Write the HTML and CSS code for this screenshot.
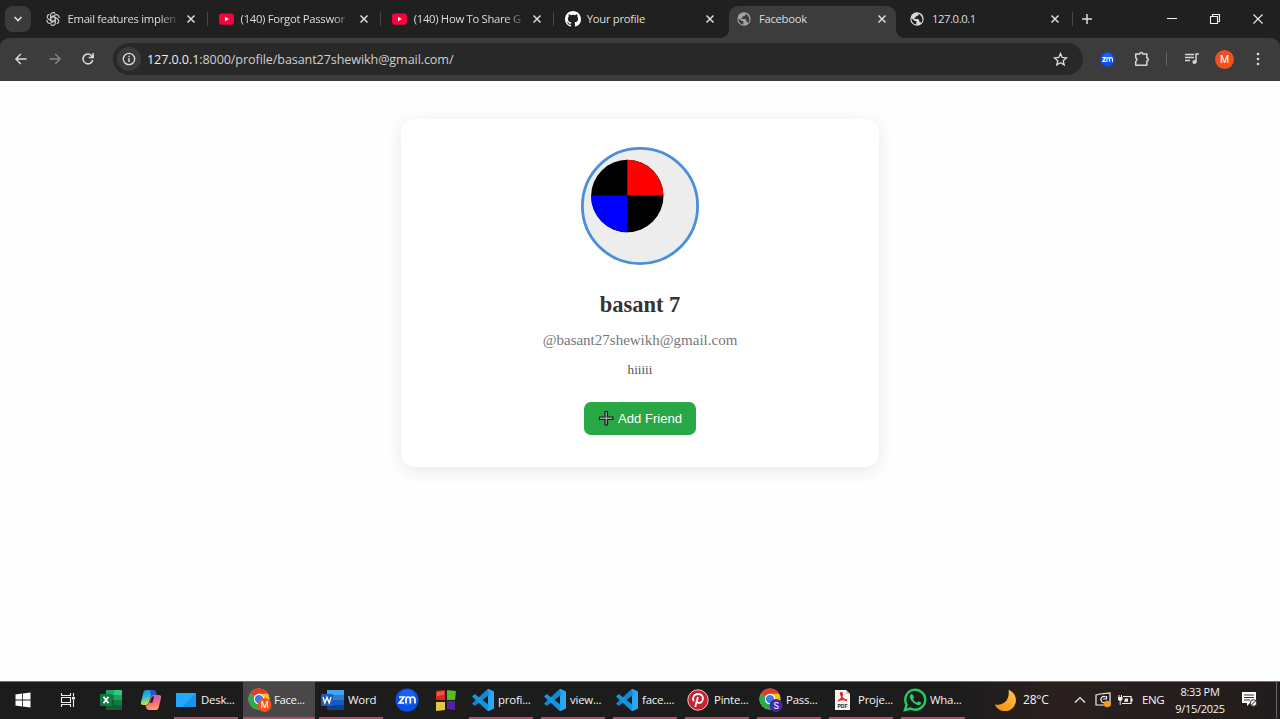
FILE: index.html
```html
<!DOCTYPE html>
<html lang="en">
<head>
<meta charset="utf-8">
<title>Facebook</title>
<link rel="stylesheet" href="styles.css">
</head>
<body>
<svg class="defs" aria-hidden="true">
  <symbol id="close" viewBox="0 0 10 10"><path d="M1.500 1.500l7 7M8.500 1.500l-7 7" fill="none" stroke="currentColor" stroke-width="1.500"/></symbol>
  <symbol id="youtube" viewBox="0 0 16 12"><rect width="16" height="12" rx="3" fill="#f5043b"/><path d="M6.300 3.500v5l4.200-2.500z" fill="#fff"/></symbol>
  <symbol id="globe" viewBox="0 0 14 14"><circle cx="7" cy="7" r="6.700" fill="currentColor"/><path d="M1.500 6.300l3.200 2.800h1.600v3.400C3.700 12.200 1.500 10 1.500 7zM8.500 1.700V3L7.200 4.300H5.700v1.500H4.500V7h3.700l1 1v1.800h1.200l.8 1.300C13.300 8.800 13 4.500 8.500 1.700z" fill="var(--hole)"/></symbol>
  <symbol id="zoom" viewBox="0 0 24 24"><circle cx="12" cy="12" r="11.500" fill="#0b50e8"/><circle cx="12" cy="9.500" r="8" fill="#2c70ff" opacity=".5"/><path d="M4 9h5L4.300 15H9M11 15.500V11.500Q11 9 13 9T15.300 11V15.500M15.300 11Q15.300 9 17.500 9T20 11.500V15.500" fill="none" stroke="#fff" stroke-width="1.700"/></symbol>
  <symbol id="vscode" viewBox="0 0 24 24"><path d="M17 .8L23 3.500V20.500L17 23.200z" fill="#2aa9f2"/><path d="M17 .8L1 15.500l2.700 2.500L18 7z" fill="#1687d3"/><path d="M17 23.200L1 8.500 3.700 6 18 17z" fill="#1596e2"/></symbol>
  <symbol id="chrome" viewBox="0 0 24 24"><circle cx="12" cy="12" r="11.500" fill="#fbc116"/><path d="M12 12L2 6.200A11.500 11.500 0 0 1 22 6.300H12z" fill="#e33b2e"/><path d="M12 12L2 6.200A11.500 11.500 0 0 0 12 23.500L17 15z" fill="#2da94f"/><circle cx="12" cy="12" r="5.700" fill="#fff"/><circle cx="12" cy="12" r="4.500" fill="#3b7ded"/></symbol>
</svg>

<header class="browser">
  <nav class="tabs">
    <div class="tab-search"><svg width="10" height="10" viewBox="0 0 10 10"><path d="M1.500 3L5 6.500 8.500 3" fill="none" stroke="#ddd" stroke-width="1.700"/></svg></div>
    <div class="tab"><span class="fav"><svg width="14" height="14" viewBox="0 0 16 16" fill="none" stroke="#c9c9c9" stroke-width="1.400"><path id="petal" d="M5.300 7V3.500A3 3 0 0 1 10.500 1.700M5.300 9.500L8 11l3.400-2"/><use href="#petal" transform="rotate(60 8 8)"/><use href="#petal" transform="rotate(120 8 8)"/><use href="#petal" transform="rotate(180 8 8)"/><use href="#petal" transform="rotate(240 8 8)"/><use href="#petal" transform="rotate(300 8 8)"/></svg></span><span class="label long">Email features implen</span><svg class="x"><use href="#close"/></svg></div>
    <div class="tab"><span class="fav"><svg width="15" height="12"><use href="#youtube"/></svg></span><span class="label long">(140) Forgot Passwor</span><svg class="x"><use href="#close"/></svg></div>
    <div class="tab"><span class="fav"><svg width="15" height="12"><use href="#youtube"/></svg></span><span class="label long">(140) How To Share G</span><svg class="x"><use href="#close"/></svg></div>
    <div class="tab plain"><span class="fav"><svg width="16" height="16" viewBox="0 0 16 16"><path fill="#fff" d="M8 0C3.580 0 0 3.580 0 8c0 3.540 2.290 6.530 5.470 7.590.4.070.55-.17.55-.38 0-.19-.01-.82-.01-1.490-2.010.37-2.530-.49-2.690-.94-.09-.23-.48-.94-.82-1.130-.28-.15-.68-.52-.01-.53.63-.01 1.080.58 1.230.82.72 1.210 1.870.87 2.330.66.07-.52.28-.87.51-1.070-1.780-.2-3.640-.89-3.640-3.950 0-.87.31-1.590.82-2.150-.08-.2-.36-1.020.08-2.120 0 0 .67-.21 2.200.82A7.700 7.700 0 0 1 8 3.860c.68 0 1.360.09 2 .27 1.530-1.040 2.200-.82 2.200-.82.44 1.100.16 1.920.08 2.120.51.56.82 1.270.82 2.150 0 3.070-1.870 3.750-3.650 3.950.29.25.54.73.54 1.480 0 1.070-.01 1.930-.01 2.200 0 .21.15.46.55.38A8 8 0 0 0 16 8c0-4.420-3.580-8-8-8z"/></svg></span><span class="label">Your profile</span><svg class="x"><use href="#close"/></svg></div>
    <div class="tab active"><span class="fav"><svg width="14" height="14"><use href="#globe"/></svg></span><span class="label">Facebook</span><svg class="x"><use href="#close"/></svg></div>
    <div class="tab"><span class="fav light"><svg width="14" height="14"><use href="#globe"/></svg></span><span class="label ip">127.0.0.1</span><svg class="x"><use href="#close"/></svg></div>
    <svg class="new-tab" width="12" height="12" viewBox="0 0 12 12"><path d="M6 1v10M1 6h10" stroke="#ddd" stroke-width="1.500"/></svg>
    <div class="window-controls">
      <svg width="12" height="12" viewBox="0 0 12 12"><path d="M1 5.500h10" stroke="#eee"/></svg>
      <svg width="12" height="12" viewBox="0 0 12 12"><path d="M1.500 3.500h7v7h-7zM3.500 3.500v-2h7v7h-2" fill="none" stroke="#eee" stroke-width="1.100"/></svg>
      <svg width="12" height="12" viewBox="0 0 12 12"><path d="M1.500 1.500l9 9M10.500 1.500l-9 9" stroke="#eee" stroke-width="1.100"/></svg>
    </div>
  </nav>
  <div class="toolbar">
    <div class="nav-buttons">
      <svg width="14" height="14" viewBox="0 0 14 14"><path d="M12.500 7H2M6.800 2L1.900 7l4.900 5" fill="none" stroke="#ddd" stroke-width="1.400"/></svg>
      <svg width="14" height="14" viewBox="0 0 14 14"><path d="M1.500 7H12M7.200 2l4.900 5-4.900 5" fill="none" stroke="#858585" stroke-width="1.400"/></svg>
      <svg width="14" height="14" viewBox="0 0 14 14"><path d="M11.700 8A4.900 4.900 0 1 1 10.600 3.700L12 5.200M12.200 1v4.500H7.800" fill="none" stroke="#ddd" stroke-width="1.500"/></svg>
    </div>
    <div class="address">
      <span class="info"><svg width="14" height="14" viewBox="0 0 14 14"><circle cx="7" cy="7" r="5.700" fill="none" stroke="#ddd" stroke-width="1.300"/><path d="M7 6v4M7 3.700v1.400" stroke="#ddd" stroke-width="1.400"/></svg></span>
      <span class="url"><b>127.0.0.1</b>:8000/profile/basant27shewikh@gmail.com/</span>
      <svg class="star" width="15" height="15" viewBox="0 0 15 15"><path d="M7.500 1.500l1.700 4 4.300.4-3.300 2.800 1 4.200-3.700-2.200-3.700 2.200 1-4.200L1.500 5.900l4.300-.4z" fill="none" stroke="#ddd" stroke-width="1.300"/></svg>
    </div>
    <div class="extensions">
      <svg class="zoom-ext" width="15" height="15"><use href="#zoom"/></svg>
      <svg class="puzzle" width="16" height="16" viewBox="0 0 16 16"><path d="M1.700 3h4.100a1.500 1.500 0 0 1 3 0h4v4a1.500 1.500 0 0 1 0 3v4.300H1.700v-4a2 2 0 0 0 0-3.600z" fill="none" stroke="#d5d5d5" stroke-width="1.500" stroke-linejoin="round"/></svg>
      <i class="rule"></i>
      <svg class="media" width="16" height="14" viewBox="0 0 16 14"><path d="M1 2.500h9M1 5.500h9M1 8.500h5" stroke="#d5d5d5" stroke-width="1.500"/><path d="M12 10V2h3" fill="none" stroke="#d5d5d5" stroke-width="1.500"/><circle cx="10.500" cy="10" r="2.100" fill="#d5d5d5"/></svg>
      <span class="account">M</span>
      <svg width="4" height="14" viewBox="0 0 4 14" fill="#ddd"><circle cx="2" cy="2" r="1.300"/><circle cx="2" cy="7" r="1.300"/><circle cx="2" cy="12" r="1.300"/></svg>
    </div>
  </div>
</header>

<main>
  <section class="card">
    <svg class="avatar" viewBox="0 0 118 118"><circle cx="59" cy="59" r="57.600" fill="#ededed" stroke="#4a90d9" stroke-width="2.800"/><circle cx="46.300" cy="49" r="36.200"/><path d="M46.300 48.500V12.800A36.200 36.200 0 0 1 82.500 48.500z" fill="#f00"/><path d="M46.300 48.500H10.100A36.200 36.200 0 0 0 46.300 85.200z" fill="#00f"/></svg>
    <h1>basant 7</h1>
    <p class="username">@basant27shewikh@gmail.com</p>
    <p class="bio">hiiiii</p>
    <button class="add"><svg width="16" height="16" viewBox="0 0 16 16"><path d="M7 1.500h2.500V7H15v2.500H9.500V15H7V9.500H1.500V7H7z" fill="#a89bab" stroke="#15251a" stroke-width="1.200"/></svg>Add Friend</button>
  </section>
</main>

<footer class="taskbar">
  <div class="slot w45"><svg width="16" height="16" viewBox="0 0 16 16" fill="#fff"><path d="M.5 2.500L7 1.600v6H.5zM7.800 1.500L15.500.4v7.200H7.800zM.5 8.400H7v6L.5 13.500zM7.800 8.400h7.700v7.200L7.800 14.500z"/></svg></div>
  <div class="slot w45"><svg width="16" height="16" viewBox="0 0 16 16"><path d="M1.500 1v2.500h9V1M1.500 15v-2.500h9V15M1.500 5.500h9v5h-9zM13.500 1v3.500M13.500 8v7" fill="none" stroke="#eee" stroke-width="1.100"/><path d="M12 5h3v2.500h-3z" fill="#eee"/></svg></div>
  <div class="slot w42"><svg width="24" height="22" viewBox="0 0 24 22"><path d="M7 1h16v20H7z" fill="#21a366"/><path d="M15 1h8v5h-8z" fill="#33c481"/><path d="M7 6h8v5H7z" fill="#107c41"/><path d="M15 11h8v5h-8z" fill="#107c41"/><path d="M7 11h8v10H7z" fill="#185c37"/><path d="M15 16h8v5h-8z" fill="#185c37"/><rect x="1" y="5" width="12" height="12" rx="1" fill="#107c41"/><path d="M4.500 7.700l5 6.600M9.500 7.700l-5 6.600" stroke="#fff" stroke-width="1.800"/></svg></div>
  <div class="slot w38"><svg width="22" height="22" viewBox="0 0 22 22"><defs><linearGradient id="coA" x1="0" y1="0" x2=".3" y2="1"><stop stop-color="#1785e5"/><stop offset=".5" stop-color="#25bfd4"/><stop offset="1" stop-color="#e9da3a"/></linearGradient><linearGradient id="coB" x1="0" y1="0" x2=".3" y2="1"><stop stop-color="#a367ef"/><stop offset=".5" stop-color="#ee5f98"/><stop offset="1" stop-color="#ff9e55"/></linearGradient></defs><path d="M6 1h7q2 0 2.700 2l.8 2.500h-3q-2 0-2.700 2L8.500 14q-.7 2-2.700 2H3Q.3 16 1 13L3.500 3Q4.100 1 6 1z" fill="url(#coA)"/><path d="M13 6h5.500Q22 6 21 9l-2.500 10Q18 21 16 21H9q-2 0-2.700-2l-.8-2.700Q8 16.300 9 14l2-6q.6-2 2-2z" fill="url(#coB)"/><path d="M10 1h3q2 0 2.700 2l.8 2.500h-3L11 7z" fill="#2753c8"/><path d="M9.800 13.500L12 7.500h2.200l-2 6.500z" fill="#251d2b"/></svg></div>
  <div class="app desk"><svg width="22" height="22" viewBox="0 0 22 22"><path d="M1 4h20v14H1z" fill="#1b91ed"/><path d="M1 4h20L7 18H1z" fill="#23a9fb"/></svg><span>Desk...</span></div>
  <div class="app current"><svg width="24" height="24" viewBox="0 0 24 24"><use href="#chrome" width="22" height="22"/><circle cx="16.500" cy="17" r="7" fill="#f4511e"/><text x="16.500" y="20.200" class="badge">M</text></svg><span>Face...</span></div>
  <div class="app word"><svg width="24" height="22" viewBox="0 0 24 22"><path d="M6 1h17v5H6z" fill="#41a5ee"/><path d="M6 6h17v5H6z" fill="#2b7cd3"/><path d="M6 11h17v5H6z" fill="#185abd"/><path d="M6 16h17v5H6z" fill="#103f91"/><rect y="5" width="12" height="12" rx="1" fill="#185abd"/><path d="M2 8l1.800 6L6 8.500 8.200 14 10 8" fill="none" stroke="#fff" stroke-width="1.400"/></svg><span>Word</span></div>
  <div class="slot w40"><svg width="24" height="24"><use href="#zoom"/></svg></div>
  <div class="slot w38"><svg width="22" height="23" viewBox="0 0 22 23"><path d="M1 2l9-1v10H1z" fill="#d6281b"/><path d="M12 1l9 1-1 9h-8z" fill="#58bd20"/><path d="M1 13h9v8l-9 1z" fill="#e4c83d"/><path d="M12 12h8v9l-8-1z" fill="#5520a5"/><path d="M2 3l7-1v4L2 7z" fill="#e75c43"/></svg></div>
  <div class="app"><svg width="24" height="24"><use href="#vscode"/></svg><span>profi...</span></div>
  <div class="app"><svg width="24" height="24"><use href="#vscode"/></svg><span>view...</span></div>
  <div class="app"><svg width="24" height="24"><use href="#vscode"/></svg><span>face....</span></div>
  <div class="app"><svg width="22" height="22" viewBox="0 0 22 22"><circle cx="11" cy="11" r="10.200" fill="#cb2030" stroke="#e8c7c7"/><path d="M8.200 18l2.700-10M6.800 12.200C4.700 9 7 5 11.400 5c4 0 5.300 3.500 4.200 6.200-1 2.900-4.500 3.500-5.600 1.300" fill="none" stroke="#fff" stroke-width="1.800"/></svg><span>Pinte...</span></div>
  <div class="app"><svg width="24" height="24" viewBox="0 0 24 24"><use href="#chrome" width="22" height="22"/><circle cx="17" cy="17.500" r="6.500" fill="#4527a0"/><text x="17" y="20.700" class="badge">S</text></svg><span>Pass...</span></div>
  <div class="app"><svg width="22" height="22" viewBox="0 0 22 22"><path d="M4 1h11l4 4v16H4z" fill="#f8f6f5"/><path d="M15 1l4 4h-4z" fill="#d7bfbc"/><path d="M7 12c3-1 5-5 4-8-1-1-1.800 0-1 2 1 3 3 5 6 5.500M7 12c2-1.500 5-2 9-1" fill="none" stroke="#d72820" stroke-width="1.500"/><text x="11.500" y="18.700" class="pdf">PDF</text></svg><span>Proje...</span></div>
  <div class="app"><svg width="24" height="24" viewBox="0 0 24 24"><path d="M2 22l1.600-5.300A10 10 0 1 1 7.500 20.500z" fill="#1c1c1c" stroke="#25c862" stroke-width="2.400"/><path d="M8 6.300c-2 1.200-1.500 4 1 7s6 4.600 8 3.500c1-.6 1.300-1.700 1-2.200l-2.500-1.300-1.500 1.500c-2-.8-3.200-2-4-3.800L11 9.500 9.500 6.300z" fill="#30ce69"/></svg><span>Wha...</span></div>
  <div class="tray">
    <svg class="moon" width="22" height="22" viewBox="0 0 22 22"><defs><linearGradient id="mg" x1="1" y1="0" x2="0" y2="1"><stop stop-color="#ffc44a"/><stop offset="1" stop-color="#f58a0c"/></linearGradient></defs><path d="M14.500.8A11 11 0 1 1 .8 15.500C10 17 16 11 14.500.8z" fill="url(#mg)"/></svg>
    <span class="temp">28°C</span>
    <svg class="chev" width="12" height="8" viewBox="0 0 12 8"><path d="M1 6.500L6 1.500l5 5" fill="none" stroke="#eee" stroke-width="1.200"/></svg>
    <svg class="sync" width="16" height="16" viewBox="0 0 16 16"><path d="M1 3l4-1 10-1v12H1z" fill="none" stroke="#eee" stroke-width="1.200"/><path d="M10.500 5a3 3 0 1 0 .2 5M8 7h3.500V4" fill="none" stroke="#eee" stroke-width="1.200"/><circle cx="12.300" cy="12" r="3.300" fill="#f59a18"/></svg>
    <svg class="battery" width="16" height="12" viewBox="0 0 16 12"><path d="M6 2.500h8v7H5M15 4.500v3" fill="none" stroke="#eee" stroke-width="1.200"/><path d="M8 4.500h3v3.300H7z" fill="#eee"/><path d="M1 3h4.500v2.500L4 7H2.500L1 5.500z" fill="#eee"/><path d="M2 1v2M4.500 1v2M3.200 7v4" stroke="#eee"/></svg>
    <span class="lang">ENG</span>
    <span class="clock"><span>8:33 PM</span><span class="date">9/15/2025</span></span>
    <svg class="notes" width="17" height="17" viewBox="0 0 17 17"><path d="M1 1h14v11H9l-3 3v-3H1z" fill="#fff"/><path d="M3 4h10M3 6.500h10M3 9h6" stroke="#333"/><circle cx="12.500" cy="12" r="3.300" fill="#eee" stroke="#333"/><path d="M10.500 14l4-4" stroke="#333"/></svg>
    <i class="peek"></i>
  </div>
</footer>
</body>
</html>
```
FILE: styles.css
```css
* { box-sizing: border-box; }
body { margin: 0; width: 1280px; height: 719px; display: flex; flex-direction: column; overflow: hidden; background: #fefefe; font-family: "Open Sans", "Noto Sans", sans-serif; }
svg { display: block; flex: none; }
.defs { position: absolute; width: 0; height: 0; }

.browser { height: 81px; background: #202020; color: #ddd; flex: none; }
.tabs { height: 38px; display: flex; align-items: center; }
.tab-search { width: 26px; height: 26px; margin: 0 4px 0 5px; border-radius: 8px; background: #3b3b3b; display: flex; align-items: center; justify-content: center; }
.tab { position: relative; width: 173.100px; height: 38px; padding-left: 11px; display: flex; align-items: center; flex: none; font-size: 11.3px; }
.tab::after { content: ""; position: absolute; right: 0; top: 12px; width: 1px; height: 14px; background: #484848; }
.tab.plain::after, .tab.active::after { display: none; }
.fav { width: 15px; margin-right: 6.500px; color: #9da3a8; --hole: #3c3c3c; }
.fav.light { color: #d8d8d8; --hole: #202020; }
.label { width: 112px; padding-bottom: 1px; white-space: nowrap; letter-spacing: -.3px; }
.label.long { -webkit-mask-image: linear-gradient(90deg, #000 82%, transparent); mask-image: linear-gradient(90deg, #000 82%, transparent); }
.label.ip { letter-spacing: -.4px; }
.x { width: 10px; height: 10px; margin-left: 6px; }
.tab.active { width: 167px; margin: 6px 4px 0 2px; height: 32px; padding: 0 0 6px 7.500px; border-radius: 9px 9px 0 0; background: #3c3c3c; }
.tab.active .fav { margin-right: 7px; }
.tab.active::before { content: ""; position: absolute; left: -8px; right: -8px; bottom: 0; height: 8px; background: radial-gradient(circle at 0 0, transparent 7.5px, #3c3c3c 8px) left / 8px 8px no-repeat, radial-gradient(circle at 100% 0, transparent 7.5px, #3c3c3c 8px) right / 8px 8px no-repeat; }
.tab.active + .tab { padding-left: 10px; }
.new-tab { margin-left: 8px; }
.window-controls { margin-left: auto; margin-right: 16px; display: flex; gap: 31px; }

.toolbar { height: 43px; background: #3c3c3c; border-radius: 9px 9px 0 0; display: flex; align-items: center; }
.nav-buttons { width: 112.500px; padding: 0 0 1px 14px; display: flex; gap: 19.5px; }
.address { width: 970.500px; height: 32px; margin-bottom: 1px; border-radius: 16px; background: #282828; display: flex; align-items: center; }
.info { width: 24px; height: 24px; margin-left: 4px; border-radius: 50%; background: #3b3b3b; display: flex; align-items: center; justify-content: center; }
.url { margin-left: 6.500px; font-size: 12.6px; letter-spacing: -.1px; white-space: nowrap; color: #cfcfcf; }
.url b { font-weight: 400; color: #eee; }
.star { margin-left: auto; margin-right: 15px; }
.extensions { flex: 1; padding: 0 0 1px 17px; display: flex; align-items: center; }
.puzzle { margin-left: 19px; }
.rule { width: 1px; height: 14px; margin: 0 17px 0 16px; background: #646464; }
.account { width: 19px; height: 19px; margin: 0 22px 0 15px; border-radius: 50%; background: #f0501f; color: #fff; font: 10.5px/19px Roboto, sans-serif; text-align: center; }

main { flex: 1; padding-top: 38px; display: flex; align-items: flex-start; justify-content: center; }
.card { width: 478px; height: 348px; padding-top: 28px; border-radius: 14px; background: #fff; box-shadow: 0 4px 17px rgba(0, 0, 0, .09); display: flex; flex-direction: column; align-items: center; font-family: "Liberation Serif", serif; }
.avatar { width: 118px; height: 118px; }
h1 { margin: 26px 0 0; font-size: 22.5px; line-height: 28px; color: #333; }
p { margin: 0; }
.username { margin-top: 12px; font-size: 15px; line-height: 18px; color: #777; }
.bio { margin-top: 13px; font-size: 13.2px; line-height: 16px; color: #555; }
.add { width: 112px; height: 33px; margin-top: 23.500px; padding: 0; border: 0; border-radius: 7px; background: #28a745; color: #fff; font: 13.1px "Liberation Sans", sans-serif; display: flex; align-items: center; justify-content: center; gap: 4px; }

.taskbar { height: 38px; background: linear-gradient(90deg, #1c1c1c 75%, #2a201e 82%, #211c1b); border-top: 1px solid #77706e; color: #f4f4f4; display: flex; flex: none; }
.slot { padding-bottom: 1px; display: flex; align-items: center; justify-content: center; flex: none; }
.w45 { width: 45px; }
.w42 { width: 42px; }
.w40 { width: 40px; }
.w38 { width: 38px; }
.app { position: relative; width: 72px; padding: 0 0 2px 6px; display: flex; align-items: center; flex: none; font-size: 11.4px; letter-spacing: -.2px; white-space: nowrap; }
.app span { margin-left: 3px; }
.app::after { content: ""; position: absolute; left: 4px; right: 4px; bottom: 0; height: 2px; background: #a9526e; }
.app svg[width="22"] + span { margin-left: 5px; }
.app.desk { padding-left: 5px; }
.app.desk svg + span { margin-left: 4px; }
.app.current { padding-left: 5px; background: #494747; margin-left: 1px; }
.app.current::after { left: 0; right: 0; }
.app.current span { margin-left: 2px; letter-spacing: -.35px; }
.badge { font: 9px Roboto, sans-serif; fill: #fff; text-anchor: middle; }
.pdf { font: bold 5px "Liberation Sans", sans-serif; fill: #222; text-anchor: middle; letter-spacing: 0; }
.tray { flex: 1; padding: 0 0 2px 25px; display: flex; align-items: center; font-size: 11.5px; letter-spacing: -.2px; }
.temp { width: 30px; margin-left: 7px; font-size: 12px; }
.chev { margin-left: 21px; }
.sync { margin-left: 9px; }
.battery { margin-left: 6px; }
.lang { width: 24px; margin-left: 9px; letter-spacing: -.4px; }
.clock { width: 54px; margin-left: 7px; display: flex; flex-direction: column; align-items: center; font-size: 11px; line-height: 17px; letter-spacing: -.3px; white-space: nowrap; }
.notes { margin-left: 14px; }
.peek { width: 1px; height: 37px; margin-left: 18px; background: #666; }
```
